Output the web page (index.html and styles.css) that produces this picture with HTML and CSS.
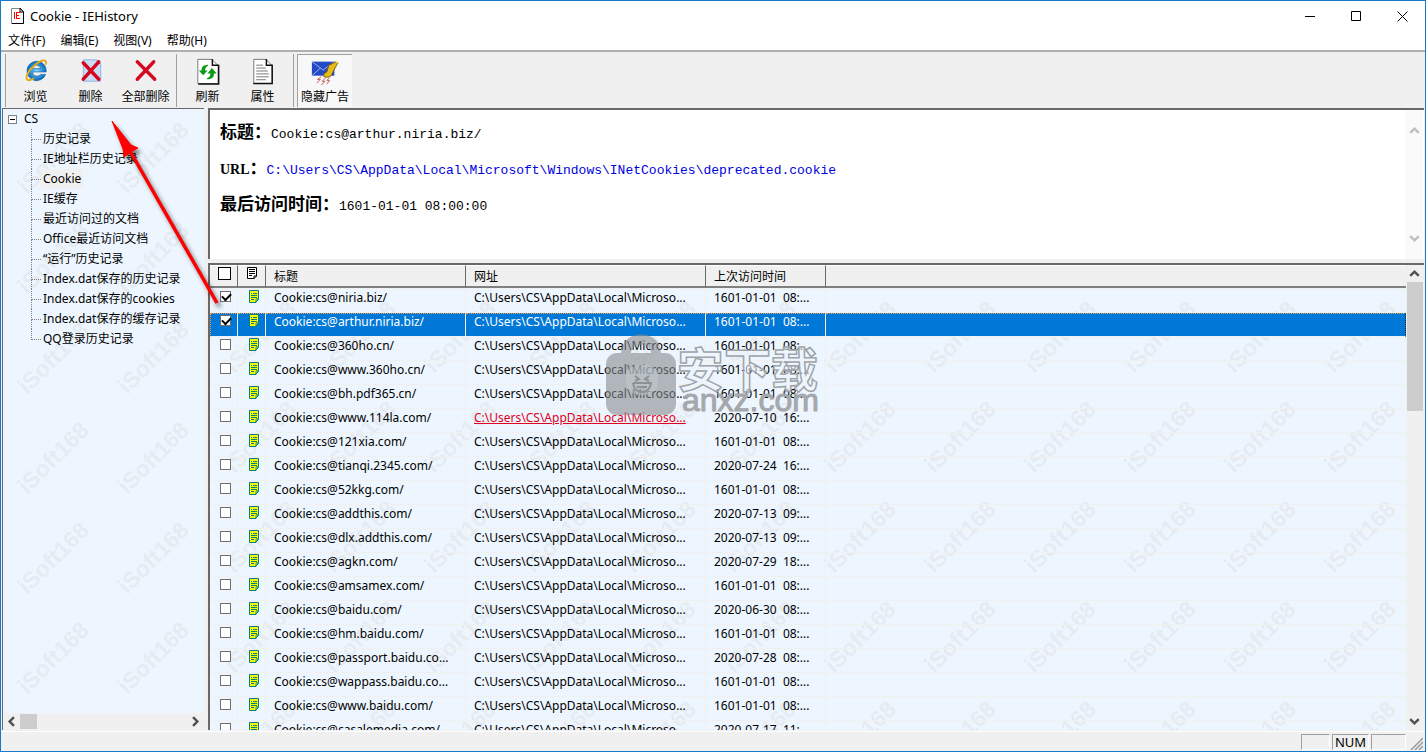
FILE: index.html
```html
<!DOCTYPE html>
<html lang="zh-CN">
<head>
<meta charset="utf-8">
<title>Cookie - IEHistory</title>
<link rel="stylesheet" href="styles.css">
</head>
<body>
<svg class="defs" aria-hidden="true">
  <defs>
    <symbol id="note" viewBox="0 0 11 13"><path d="M1 1H10V9L7 12H1Z" fill="#ff0"/><path d="M.5.5H9.500V9L7 12.500H.5ZM7 12V9H10" fill="none" stroke="#008080"/><path d="M2 3.500H3M4 3.500H8M2 5.500H8M2 7.500H8M2 9.500H5" stroke="#008080" fill="none"/></symbol>
    <symbol id="chev" viewBox="0 0 9 9"><path d="M1 6.500L4.500 3L8 6.500" fill="none" stroke="currentColor" stroke-width="2"/></symbol>
    <pattern id="mark" width="100" height="100" patternUnits="userSpaceOnUse"><text class="mark-text" transform="translate(24 86) rotate(-45)">iSoft168</text></pattern>
  </defs>
</svg>
<div class="window">
  <header class="titlebar">
    <svg class="app-icon" viewBox="0 0 13 16"><path d="M.5.5H9L12.500 4V15.500H.5Z" fill="#fff" stroke="#888"/><path d="M9 0L12.500 4V15.500H1M9 0V4H13" fill="none" stroke="#000"/><path d="M3.500 4V11M5.500 4V11M5 4.500H9M5 7.500H8M5 10.500H9" stroke="#f00" fill="none"/></svg>
    <h1 class="title">Cookie - IEHistory</h1>
    <button class="win-btn" aria-label="Minimize"><svg viewBox="0 0 11 11"><path d="M0 5.500H10" stroke="#000"/></svg></button>
    <button class="win-btn" aria-label="Maximize"><svg viewBox="0 0 11 11"><path d="M.5.5H9.500V9.500H.5Z" fill="none" stroke="#000"/></svg></button>
    <button class="win-btn" aria-label="Close"><svg viewBox="0 0 11 11"><path d="M.5.5L10.500 10.500M10.500.5L.5 10.500" stroke="#000"/></svg></button>
  </header>
  <nav class="menubar">
    <button>文件(F)</button><button>编辑(E)</button><button>视图(V)</button><button>帮助(H)</button>
  </nav>
  <div class="toolbar">
    <div class="group">
      <button class="tool"><svg viewBox="0 0 32 32"><defs><radialGradient id="ie"><stop offset="0" stop-color="#7fd8ff"/><stop offset="1" stop-color="#0868b8"/></radialGradient></defs><path d="M16.500 6.500A10 10 0 1 0 26 20H20.500C18 23 12.500 22 12.500 17.500H26.500C27 11 22.500 6.500 16.500 6.500ZM12.500 14C13 9.500 20 9.500 20.500 14Z" fill="url(#ie)" stroke="#0a5ca4" stroke-width=".6"/><path d="M26 10C28 3 21 5 14 11C7 17 4 25 8 26C10 26.500 13 24.500 14 24" fill="none" stroke="#e8a81c" stroke-width="2"/></svg><span>浏览</span></button>
      <button class="tool"><svg viewBox="0 0 32 32"><path d="M8 5H22L26 9V27H8Z" fill="#c8dcf6" stroke="#8fb2e0"/><path d="M22 5V9H26" fill="#4274bd"/><path d="M8 8L24 25M24 7L8 25" stroke="#d8041c" stroke-width="3.500" stroke-linecap="round"/></svg><span>删除</span></button>
      <button class="tool"><svg viewBox="0 0 32 32"><path d="M7 7L25 25M24 7L7 25" stroke="#d40a20" stroke-width="3.500" stroke-linecap="round"/></svg><span>全部删除</span></button>
    </div>
    <div class="group">
      <button class="tool"><svg viewBox="0 0 32 32"><path d="M5.500 4.500H20L26.500 11V29.500H5.500Z" fill="#fff" stroke="#777"/><path d="M20.500 4V10.500H27M27 10V30H6" fill="none" stroke="#111" stroke-width="1.500"/><path d="M16 10C10 10 9 14 9.500 16H6.500L11 21L15.500 16H13C13 13 14 12 16 11ZM15 25C21 25 22.500 22 22 19H25L20 13.500L15.500 19H18.500C18.500 22 17 23 15 24Z" fill="#0a9a14"/></svg><span>刷新</span></button>
      <button class="tool"><svg viewBox="0 0 32 32"><path d="M6.500 4.500H19L25.500 11V29.500H6.500Z" fill="#fff" stroke="#777"/><path d="M19.500 4V10.500H26M25.500 10V29.500H6" fill="none" stroke="#111" stroke-width="1.500"/><path d="M9 10.500H16M9 13.500H19M9 16.500H21M9 19.500H22M9 22.500H22M9 25.500H19" stroke="#777"/></svg><span>属性</span></button>
    </div>
    <div class="group">
      <button class="tool active" aria-pressed="true"><svg viewBox="0 0 32 32"><path d="M2 6H26V21H2Z" fill="#2449c4"/><path d="M2 6L14 15L26 6M2 21L11 13" fill="none" stroke="#9db8f4"/><path d="M28 6L20 10L18 17C15 18 14 20 15 22C18 23 21 23 23 20C25 16 27 12 30 7Z" fill="#e8bc18" stroke="#7a5b00"/><path d="M28 5L30 7" stroke="#fff2a0" stroke-width="2"/><path d="M12 22L8 25H11L7 29M17 23L13 27H16L12 31M21 23L18 26H21L18 30" fill="none" stroke="#c05a50"/></svg><span>隐藏广告</span></button>
    </div>
  </div>
  <main class="main">
    <aside class="tree-pane">
      <div class="tree-view">
        <svg class="marks" aria-hidden="true"><rect width="100%" height="100%" fill="url(#mark)"/></svg>
        <div class="root"><button class="expander" aria-label="折叠"></button><span>CS</span></div>
        <ul class="tree">
          <li>历史记录</li><li>IE地址栏历史记录</li><li><span class="current">Cookie</span></li><li>IE缓存</li><li>最近访问过的文档</li><li>Office最近访问文档</li><li>“运行”历史记录</li><li>Index.dat保存的历史记录</li><li>Index.dat保存的cookies</li><li>Index.dat保存的缓存记录</li><li>QQ登录历史记录</li>
        </ul>
      </div>
      <div class="hscroll"><button aria-label="向左"><svg class="left"><use href="#chev"/></svg></button><div class="thumb"></div><button aria-label="向右"><svg class="right"><use href="#chev"/></svg></button></div>
    </aside>
    <div class="content">
      <section class="detail">
        <div class="detail-text">
          <p><b>标题：</b>Cookie:cs@arthur.niria.biz/</p>
          <p><b><span class="latin">URL</span>：</b><a href="#">C:\Users\CS\AppData\Local\Microsoft\Windows\INetCookies\deprecated.cookie</a></p>
          <p><b>最后访问时间：</b>1601-01-01 08:00:00</p>
        </div>
        <div class="vscroll disabled"><button aria-label="向上" disabled><svg><use href="#chev"/></svg></button><button aria-label="向下" disabled><svg class="down"><use href="#chev"/></svg></button></div>
      </section>
      <section class="list">
        <div class="list-view">
          <svg class="marks list-marks" aria-hidden="true"><rect width="100%" height="100%" fill="url(#mark)"/></svg>
          <table>
            <colgroup><col class="c-check"><col class="c-icon"><col class="c-title"><col class="c-url"><col class="c-time"><col></colgroup>
            <thead><tr><th><input class="check-all" type="checkbox" aria-label="全选"></th><th><svg class="note" viewBox="0 0 11 13"><path d="M.5.5H9.500V9L7 11.500H.5ZM7 12V9H10M2 2.500H8M2 4.500H8M2 6.500H8M2 8.500H5" fill="#fff" stroke="#000"/></svg></th><th>标题</th><th>网址</th><th>上次访问时间</th><th></th></tr></thead>
            <tbody id="rows"></tbody>
          </table>
        </div>
        <div class="vscroll"><button aria-label="向上"><svg><use href="#chev"/></svg></button><div class="thumb"></div><button aria-label="向下"><svg class="down"><use href="#chev"/></svg></button></div>
      </section>
    </div>
  </main>
  <footer class="status"><span class="cell"></span><span class="cell num">NUM</span><span class="cell wide"></span><svg class="grip" viewBox="0 0 13 13"><path d="M1 13L13 1M5 13L13 5M9 13L13 9" stroke="#999" stroke-width="1.500"/></svg></footer>
  <svg class="arrow" viewBox="0 0 120 200" aria-hidden="true"><path d="M108 191L21 39" stroke="#f00" stroke-width="3.500"/><path d="M3 9L22 33L29 36L22 40L15 45L14 37Z" fill="#f00" stroke="#f00"/></svg>
  <svg class="brand" viewBox="0 0 216 84" aria-hidden="true">
    <g fill="#888c90" fill-opacity=".6"><rect x="2" y="20" width="70" height="62" rx="11"/><path d="M17 20C18-5 56-5 57 20H47C46 9 28 9 27 20Z"/></g>
    <path d="M22 39C30 29 46 29 54 39V51C52 66 24 66 22 51Z" fill="#c2c9d0" fill-opacity=".5"/><path d="M31 43L35 46L31 48M45 43L41 46L45 48M29 50H47C46 62 30 62 29 50M33 54H43" fill="none" stroke="#8d9195" stroke-width="2"/>
    <text class="brand-cn" x="73" y="54">安下载</text><text class="brand-en" x="78" y="78">anxz.com</text>
  </svg>
</div>
<script src="app.js"></script>
</body>
</html>
```
FILE: app.js
```js
const cookies = [
  ["niria.biz/", "1601-01-01 08", "checked"],
  ["arthur.niria.biz/", "1601-01-01 08", "checked selected"],
  ["360ho.cn/", "1601-01-01 08", ""],
  ["www.360ho.cn/", "1601-01-01 08", ""],
  ["bh.pdf365.cn/", "1601-01-01 08", ""],
  ["www.114la.com/", "2020-07-10 16", "hot"],
  ["121xia.com/", "1601-01-01 08", ""],
  ["tianqi.2345.com/", "2020-07-24 16", ""],
  ["52kkg.com/", "1601-01-01 08", ""],
  ["addthis.com/", "2020-07-13 09", ""],
  ["dlx.addthis.com/", "2020-07-13 09", ""],
  ["agkn.com/", "2020-07-29 18", ""],
  ["amsamex.com/", "1601-01-01 08", ""],
  ["baidu.com/", "2020-06-30 08", ""],
  ["hm.baidu.com/", "1601-01-01 08", ""],
  ["passport.baidu.co...", "2020-07-28 08", ""],
  ["wappass.baidu.co...", "1601-01-01 08", ""],
  ["www.baidu.com/", "1601-01-01 08", ""],
  ["casalemedia.com/", "2020-07-17 11", ""]
];
document.getElementById("rows").innerHTML = cookies.map(([host, time, state]) => `
  <tr class="${state}">
    <td><input type="checkbox" aria-label="Cookie:cs@${host}" ${state.includes("checked") ? "checked" : ""}></td>
    <td><svg class="note"><use href="#note"/></svg></td>
    <td>Cookie:cs@${host}</td>
    <td><span class="url">C:\\Users\\CS\\AppData\\Local\\Microso...</span></td>
    <td>${time.replace(" ", "&nbsp; ")}:...</td>
    <td></td>
  </tr>`).join("");
```
FILE: styles.css
```css
* { box-sizing: border-box; }
body { margin: 0; font: 12px/20px "Noto Sans", "Noto Sans CJK SC", sans-serif; color: #000; }
button { border: 0; padding: 0; background: none; font: inherit; color: inherit; }
ul, p, h1 { margin: 0; padding: 0; }
.defs { position: absolute; width: 0; height: 0; }
.window { position: relative; display: flex; flex-direction: column; height: 100vh; border: 1px solid #1979ca; background: #f0f0f0; overflow: hidden; }
.titlebar { display: flex; align-items: center; height: 30px; padding-left: 10px; background: #fff; flex: none; }
.app-icon { width: 13px; height: 16px; }
.title { flex: 1; font-size: 13px; font-weight: 400; padding-left: 6px; }
.win-btn { width: 46px; height: 30px; }
.win-btn svg { display: block; width: 11px; height: 11px; margin: auto; }
.menubar { display: flex; gap: 15px; height: 19px; padding-left: 7px; background: #fff; flex: none; }
.toolbar { display: flex; height: 58px; flex: none; border-top: 2px solid #b0b0b0; padding: 2px 0 1px 4px; }
.group { display: flex; border-left: 1px solid #a0a0a0; padding-left: 3px; }
.group + .group { margin-left: 3px; }
.group:first-child { padding-left: 2px; }
.tool { display: flex; flex-direction: column; align-items: center; width: 55px; }
.tool svg { width: 32px; height: 32px; margin-top: 1px; }
.tool span { white-space: nowrap; margin-top: 1px; }
.active { background: #f8f8f8; border-left: 1px solid #a0a0a0; border-top: 1px solid #a0a0a0; }
.main { flex: 1; display: flex; gap: 4px; min-height: 0; padding: 0 1px 1px; }
.tree-pane { display: flex; flex-direction: column; width: 202px; flex: none; border-left: 1px solid #696969; border-top: 1px solid #696969; }
.tree-view { position: relative; flex: 1; background: #edf6ff; overflow: hidden; }
.marks { position: absolute; left: 0; top: 0; width: 100%; height: 100%; }
.mark-text { font: bold 23px "Liberation Sans", sans-serif; fill: #e5ebf1; }
.root { position: relative; display: flex; align-items: center; gap: 7px; padding-left: 5px; height: 20px; }
.expander { width: 9px; height: 9px; border: 1px solid #808080; background: linear-gradient(#000, #000) center / 5px 1px no-repeat #fff; }
.tree { position: relative; list-style: none; margin-left: 28px; }
.tree li { position: relative; height: 20px; padding-left: 12px; white-space: nowrap; }
.tree li::before { content: ""; position: absolute; left: 0; top: 0; width: 9px; height: 10px; border-left: 1px dotted #808080; border-bottom: 1px dotted #808080; }
.tree li:not(:last-child)::after { content: ""; position: absolute; left: 0; top: 10px; height: 10px; border-left: 1px dotted #808080; }
.current { background: #f0f0f0; padding: 0 2px; margin-left: -2px; display: inline-block; }
.hscroll { display: flex; align-items: center; height: 17px; flex: none; color: #505050; }
.hscroll button { width: 17px; height: 17px; }
.hscroll svg, .vscroll svg { display: block; margin: auto; width: 11px; height: 11px; }
.hscroll .thumb { width: 17px; height: 15px; background: #cdcdcd; margin-right: auto; }
.left { transform: rotate(-90deg); }
.right { transform: rotate(90deg); }
.down { transform: rotate(180deg); }
.content { flex: 1; display: flex; flex-direction: column; gap: 4px; min-width: 0; }
.detail, .list { display: flex; border-left: 2px solid #696969; border-top: 2px solid #696969; }
.detail { height: 151px; flex: none; background: #fff; }
.detail-text { flex: 1; padding: 13px 10px; font: 13px/20px "Liberation Mono", "Noto Sans CJK SC", monospace; }
.detail p { margin-bottom: 16px; height: 20px; white-space: nowrap; }
.detail b { font: bold 17px/20px "Liberation Serif", "Noto Sans CJK SC", serif; }
.detail .latin { font-size: 14px; }
.detail a { color: #0000e0; text-decoration: none; }
.vscroll { display: flex; flex-direction: column; width: 17px; flex: none; background: #f0f0f0; color: #505050; margin-right: 1px; padding-left: 1px; }
.vscroll button { height: 17px; width: 15px; flex: none; }
.vscroll .thumb { height: 129px; background: #cdcdcd; }
.vscroll button:last-child { margin-top: auto; }
.disabled { color: #bfbfbf; background: #fafafa; padding-top: 12px; padding-bottom: 12px; }
.list { flex: 1; min-height: 0; }
.list-view { position: relative; flex: 1; overflow: hidden; background: #edf6ff; min-width: 0; }
.list-marks { top: 23px; }
table { position: relative; width: 100%; table-layout: fixed; border-collapse: separate; border-spacing: 0; }
.c-check, .c-icon { width: 28px; }
.c-title { width: 200px; }
.c-url { width: 240px; }
.c-time { width: 120px; }
th { height: 23px; padding: 2px 8px 0; text-align: left; font-weight: 400; line-height: 18px; background: #f0f0f0; border-top: 1px solid #fff; border-right: 1px solid #696969; border-bottom: 2px solid #808080; }
td { height: 24px; padding: 0 8px 6px; line-height: 16px; white-space: nowrap; overflow: hidden; border-right: 1px solid #f0f0f0; border-bottom: 1px solid #f0f0f0; }
tbody tr:first-child td { height: 25px; border-top: 1px solid #f0f0f0; }
th:last-child, td:last-child { border-right: 0; }
th:nth-child(-n+2) { padding: 0 0 5px 1px; }
td:nth-child(-n+2) { padding: 0 0 8px 3px; }
td:nth-child(2) { padding-left: 6px; }
input { appearance: none; display: block; width: 11px; height: 11px; margin: 0 auto; border: 1px solid #707070; background: #fff; }
.check-all { width: 13px; height: 13px; border-color: #000; }
input:checked { position: relative; }
input:checked::after { content: ""; position: absolute; left: 1px; top: 1px; width: 7px; height: 4px; border-left: 2px solid #000; border-bottom: 2px solid #000; transform: rotate(-45deg); }
.note { display: block; width: 11px; height: 13px; margin: 0 auto; }
.selected td { background: #0078d7; color: #fff; border-top: 1px dotted #f0a050; }
.selected td:nth-child(-n+2) { padding-bottom: 9px; }
.selected td:first-child { border-left: 1px dotted #f0a050; padding-left: 2px; }
.selected td:last-child { border-right: 1px dotted #222; }
.hot .url { color: #e00020; text-decoration: underline; }
.status { display: flex; justify-content: flex-end; gap: 2px; height: 20px; padding: 2px 2px 1px; border-top: 1px solid #fff; flex: none; }
.cell { width: 29px; border: 1px solid #fff; border-top-color: #a0a0a0; border-left-color: #a0a0a0; line-height: 15px; }
.num { width: 37px; text-align: center; font-size: 13px; }
.wide { width: 35px; }
.grip { width: 13px; height: 13px; margin-left: 2px; align-self: flex-end; }
.arrow { position: absolute; left: 108px; top: 111px; width: 120px; height: 200px; filter: drop-shadow(3px 4px 2px rgba(0, 0, 0, .5)); pointer-events: none; }
.brand { position: absolute; left: 603px; top: 332px; width: 216px; height: 84px; pointer-events: none; }
.brand-cn { font: bold 47px "Noto Sans CJK SC", sans-serif; fill: #edf6ff; fill-opacity: .6; stroke: #a0a4a8; stroke-width: 1.5; }
.brand-en { font: 32px "Liberation Sans", sans-serif; fill: #a4a8ac; stroke: #a4a8ac; stroke-width: 1; }
```
